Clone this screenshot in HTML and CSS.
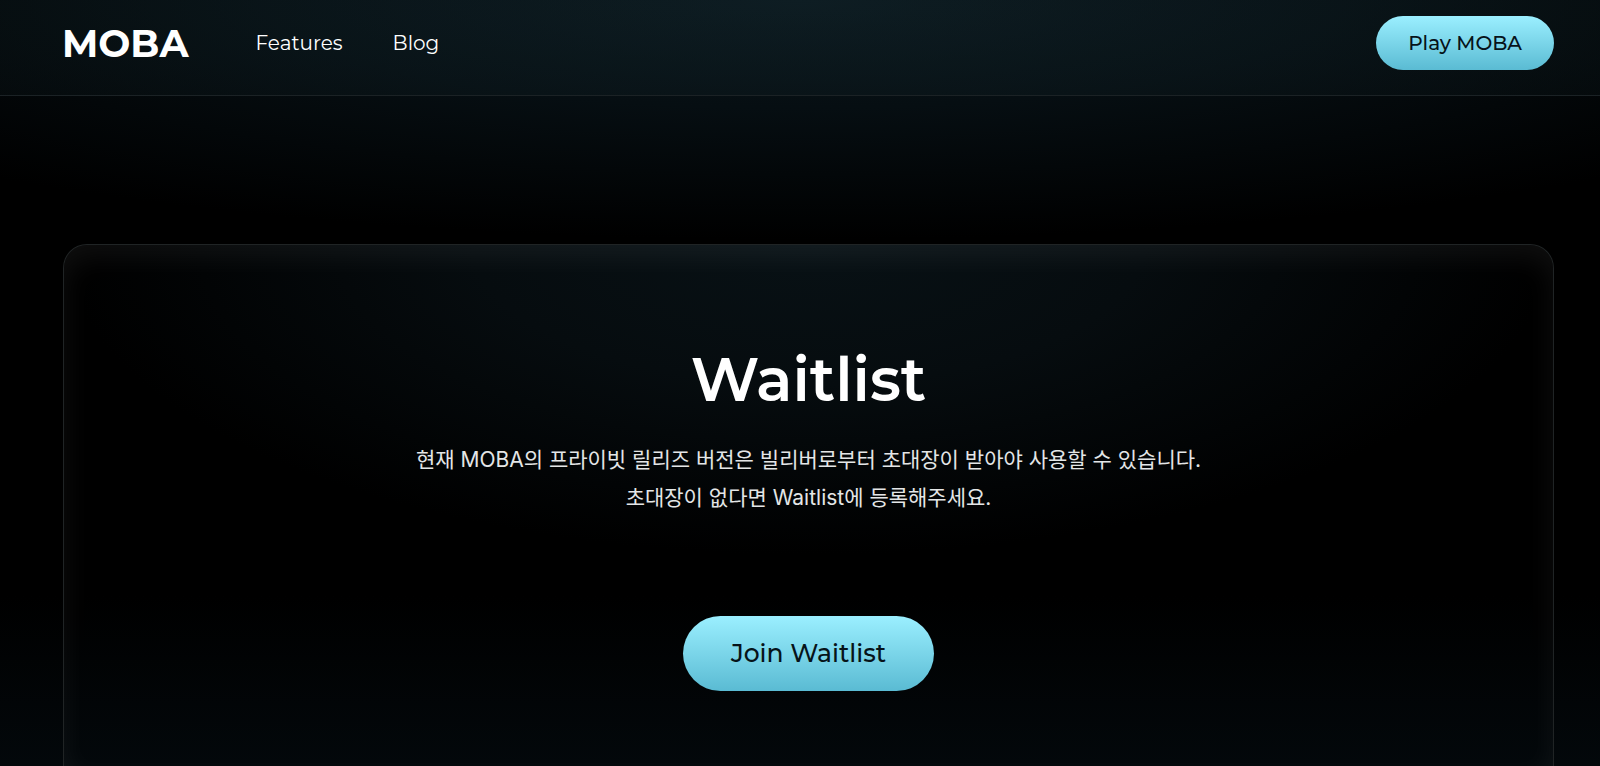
FILE: index.html
```html
<!DOCTYPE html>
<html lang="ko">
<head>
<meta charset="utf-8">
<meta name="viewport" content="width=device-width, initial-scale=1">
<title>MOBA</title>
<link rel="stylesheet" href="styles.css">
</head>
<body>
<header class="header">
  <a class="logo" href="#">MOBA</a>
  <nav class="nav">
    <a class="nav-link" href="#">Features</a>
    <a class="nav-link" href="#">Blog</a>
  </nav>
  <button class="button button-small" type="button">Play MOBA</button>
</header>
<main class="main">
  <section class="card">
    <h1 class="title">Waitlist</h1>
    <p class="description">현재 MOBA의 프라이빗 릴리즈 버전은 빌리버로부터 초대장이 받아야 사용할 수 있습니다.<br>초대장이 없다면 Waitlist에 등록해주세요.</p>
    <button class="button button-large" type="button">Join Waitlist</button>
  </section>
</main>
</body>
</html>
```

FILE: styles.css
```css
* {
  box-sizing: border-box;
}

body {
  margin: 0;
  min-height: 100vh;
  display: flex;
  flex-direction: column;
  color: #fff;
  font-family: Montserrat, Inter, "Noto Sans CJK KR", sans-serif;
  background:
    radial-gradient(ellipse 75% 240px at 50% 0, #0a161b 0%, #060e12 45%, transparent 100%),
    linear-gradient(to top, #03080b 0, transparent 170px),
    #000;
}

.header {
  display: flex;
  align-items: center;
  padding: 16px 46px 25px 62px;
  border-bottom: 1px solid #1b2225;
  background: radial-gradient(ellipse 70% 180% at 50% 0, rgba(22, 44, 52, 0.32), rgba(10, 20, 22, 0.3));
}

.logo {
  color: #fff;
  font-size: 38px;
  line-height: 53px;
  font-weight: 700;
  text-decoration: none;
}

.nav {
  display: flex;
  gap: 50px;
  margin-left: 67px;
}

.nav-link {
  color: #fff;
  font-size: 20px;
  line-height: 54px;
  font-weight: 400;
  text-decoration: none;
}

.button {
  border: 0;
  border-radius: 40px;
  color: #061319;
  font-family: inherit;
  font-weight: 500;
  white-space: nowrap;
  cursor: pointer;
  background: linear-gradient(#9befff, #5abbd3);
}

.button-small {
  margin-left: auto;
  padding: 0 32px;
  font-size: 20px;
  line-height: 54px;
}

.button-large {
  padding: 0 48px;
  font-size: 25px;
  line-height: 75px;
}

.main {
  flex: 1;
  display: flex;
  padding: 148px 46px 0 63px;
}

.card {
  flex: 1;
  display: flex;
  flex-direction: column;
  align-items: center;
  padding: 96px 32px 74px;
  border: 1px solid #202425;
  border-bottom: 0;
  border-radius: 24px 24px 0 0;
  text-align: center;
  background: radial-gradient(ellipse 50% 310px at 50% 0, #081115, #060c0f 45%, transparent);
  box-shadow: inset 0 12px 28px rgba(255, 255, 255, 0.06);
}

.title {
  margin: 0 0 22px;
  font-size: 60px;
  line-height: 78px;
  font-weight: 600;
}

.description {
  margin: 0 0 99px;
  color: #e4e6e7;
  font-family: Inter, "Noto Sans CJK KR", sans-serif;
  font-size: 21px;
  line-height: 38px;
}
```
